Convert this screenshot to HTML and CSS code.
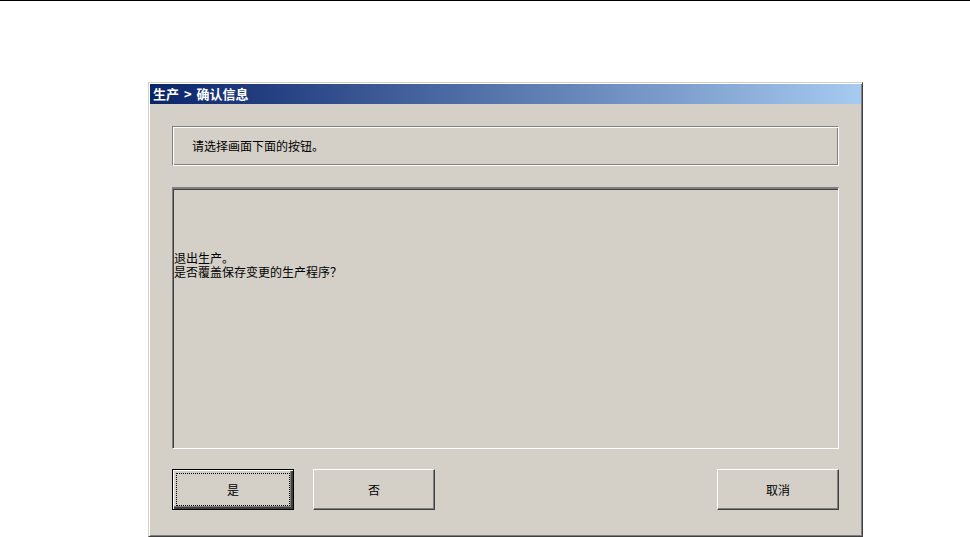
FILE: index.html
```html
<!DOCTYPE html>
<html>
<head>
    <meta charset="UTF-8">
    <title>确认信息</title>
    <link rel="stylesheet" href="styles.css">
</head>
<body>
    <div class="top-line"></div>

    <div class="dialog">
        <div class="title-bar">生产 &gt; 确认信息</div>

        <div class="dialog-body">
            <div class="info-box">请选择画面下面的按钮。</div>

            <div class="message-box">
                <div class="message-line">退出生产。</div>
                <div class="message-line">是否覆盖保存变更的生产程序？</div>
            </div>

            <div class="button-row">
                <button class="btn btn-default"><span>是</span></button>
                <button class="btn">否</button>
                <button class="btn btn-right">取消</button>
            </div>
        </div>
    </div>
</body>
</html>
```

FILE: styles.css
```css
body {
    margin: 0;
    background-color: #fff;
    font-family: "Noto Sans CJK SC", "DejaVu Sans", sans-serif;
    font-size: 12px;
    color: #000;
}

.top-line {
    height: 1px;
    background-color: #000;
}

.dialog {
    width: 715px;
    height: 455px;
    margin: 81px 0 0 148px;
    box-sizing: border-box;
    background-color: #d4d0c8;
    border-top: 1px solid #d4d0c8;
    border-left: 1px solid #d4d0c8;
    border-right: 1px solid #404040;
    border-bottom: 1px solid #404040;
    box-shadow: inset 1px 1px 0 #fff, inset -1px -1px 0 #808080;
    padding: 1px;
    display: flex;
    flex-direction: column;
}

.title-bar {
    height: 20px;
    line-height: 20px;
    padding-left: 3px;
    color: #fff;
    font-size: 13px;
    font-weight: bold;
    word-spacing: 2px;
    background: linear-gradient(to right, #0a246a, #a6caf0);
}

.dialog-body {
    flex: 1;
    padding: 22px 22px 0 22px;
    display: flex;
    flex-direction: column;
}

.info-box {
    height: 40px;
    box-sizing: border-box;
    padding-left: 19px;
    line-height: 38px;
    border: 1px solid #808080;
    border-right-color: #fff;
    border-bottom-color: #fff;
    box-shadow: inset 1px 1px 0 #fff, inset -1px -1px 0 #808080;
}

.message-box {
    height: 262px;
    margin-top: 21px;
    box-sizing: border-box;
    padding: 63px 0 0 1px;
    font-family: "Liberation Sans", "Noto Sans CJK SC", sans-serif;
    border-top: 2px solid #808080;
    border-left: 1px solid #808080;
    border-right: 1px solid #fff;
    border-bottom: 1px solid #fff;
    box-shadow: inset 1px 1px 0 #404040;
}

.message-line {
    height: 14px;
    line-height: 14px;
}

.button-row {
    display: flex;
    gap: 19px;
    margin-top: 20px;
}

.btn {
    width: 122px;
    height: 41px;
    padding: 0;
    font-family: inherit;
    font-size: 12px;
    color: #000;
    background-color: #d4d0c8;
    border: 1px solid #fff;
    border-right-color: #404040;
    border-bottom-color: #404040;
    box-shadow: inset -1px -1px 0 #808080;
}

.btn-default {
    border: 1px solid #000;
    box-shadow: inset 1px 1px 0 #fff, inset -2px -2px 0 #404040, inset -3px -3px 0 #808080;
    padding: 3px;
}

.btn-default span {
    display: flex;
    align-items: center;
    justify-content: center;
    height: 100%;
    box-sizing: border-box;
    border: 1px dotted #000;
}

.btn-right {
    margin-left: auto;
}
```
